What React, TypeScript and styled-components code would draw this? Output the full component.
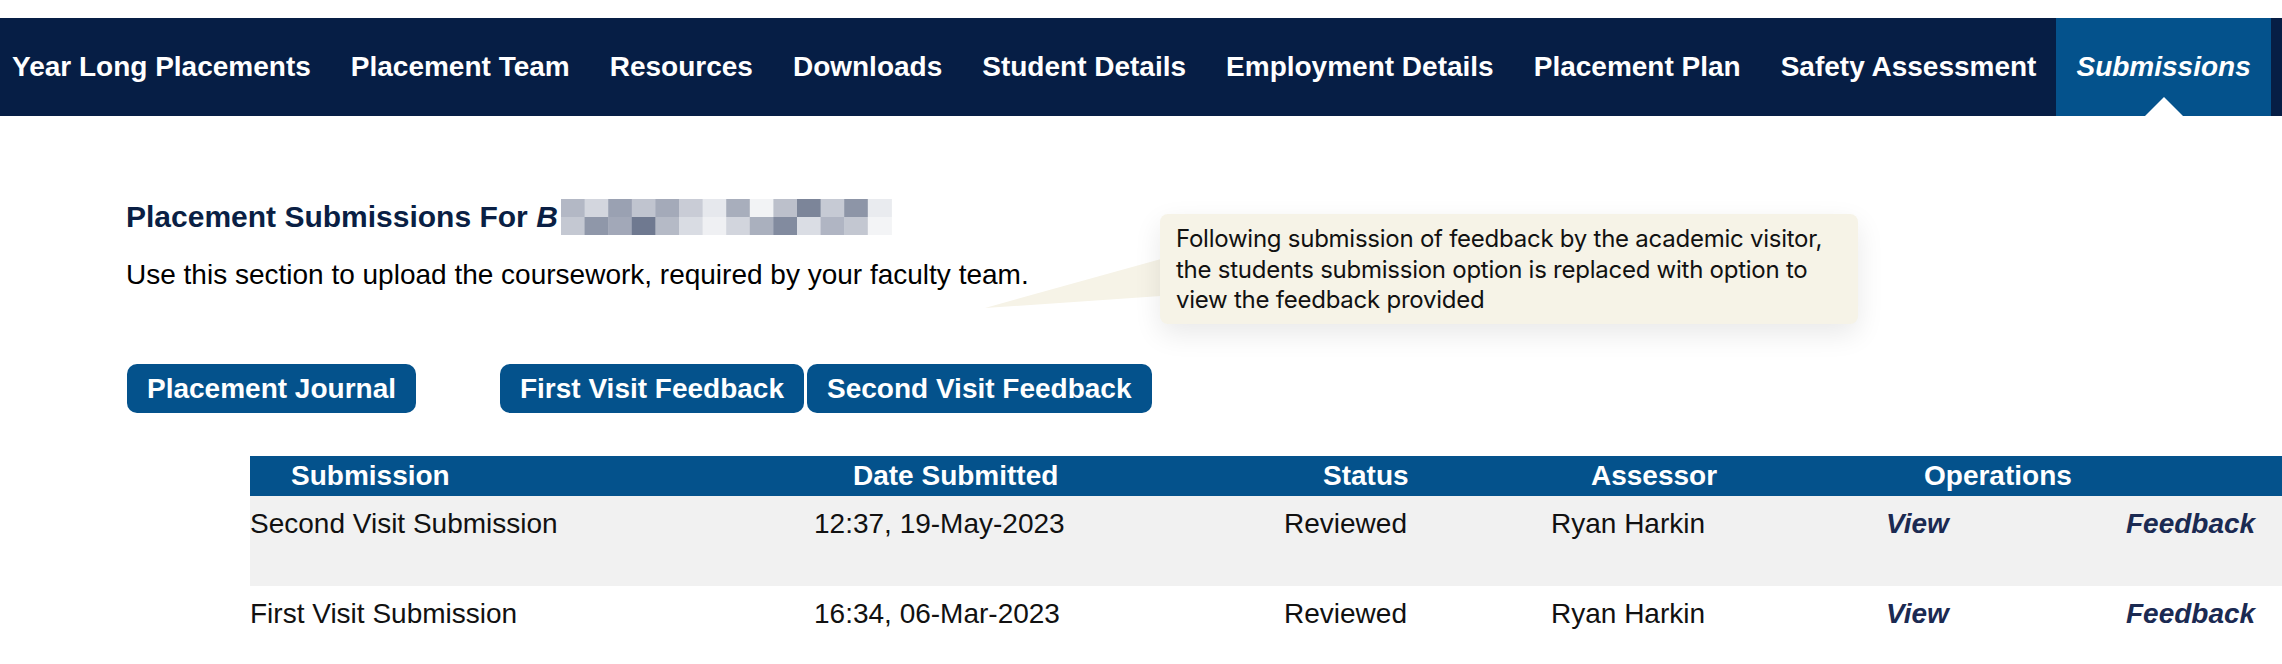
import React from "react";
import styled, { createGlobalStyle, css } from "styled-components";

const GlobalStyle = createGlobalStyle`
  html, body {
    margin: 0;
    padding: 0;
    overflow: hidden;
    background: #ffffff;
  }
  body {
    font-family: "Liberation Sans", Arial, Helvetica, sans-serif;
    color: #000;
  }
`;

const Page = styled.div`
  position: relative;
  width: 2282px;
  height: 664px;
  padding-top: 18px;
  box-sizing: border-box;
  overflow: hidden;
`;

const NavBar = styled.nav`
  display: flex;
  height: 98px;
  background: #061e45;
  overflow: hidden;
`;

const NavList = styled.ul`
  display: flex;
  height: 100%;
  margin: 0 0 0 -8px;
  padding: 0;
  list-style: none;
`;

const NavItem = styled.li<{ $active?: boolean }>`
  position: relative;
  display: flex;
  align-items: center;
  padding: 0 20px;
  font-size: 28px;
  font-weight: 700;
  color: #ffffff;
  white-space: nowrap;
  font-style: ${(p) => (p.$active ? "italic" : "normal")};
  background: ${(p) => (p.$active ? "#04528c" : "transparent")};
  ${(p) =>
    p.$active &&
    css`
      &::after {
        content: "";
        position: absolute;
        left: 50%;
        bottom: 0;
        transform: translateX(-50%);
        border-left: 19.5px solid transparent;
        border-right: 19.5px solid transparent;
        border-bottom: 19px solid #ffffff;
      }
    `}
`;

const Content = styled.main`
  display: flex;
  flex-direction: column;
  padding-left: 126px;
`;

const Heading = styled.h1`
  display: flex;
  align-items: flex-start;
  margin: 83px 0 0;
  font-size: 30px;
  line-height: 36px;
  font-weight: 700;
  color: #0a1f44;
  white-space: pre;
`;

const Name = styled.em`
  font-style: italic;
`;

const Intro = styled.p`
  margin: 24px 0 0;
  font-size: 28px;
  line-height: 32px;
  color: #000;
`;

const ButtonRow = styled.div`
  display: flex;
  align-items: center;
  margin-top: 73px;
  padding-left: 1px;
`;

const TabButton = styled.button<{ $gap?: number }>`
  height: 49px;
  margin: 0 ${(p) => p.$gap ?? 0}px 0 0;
  padding: 0 20px;
  border: none;
  border-radius: 10px;
  background: #04528c;
  color: #ffffff;
  font-family: "Liberation Sans", Arial, sans-serif;
  font-size: 28px;
  font-weight: 700;
  white-space: nowrap;
  cursor: pointer;
`;

const Table = styled.table`
  margin: 43px 0 0 124px;
  width: 2032px;
  table-layout: fixed;
  border-collapse: collapse;
  border-spacing: 0;
`;

const HeadCell = styled.th<{ $pad: number }>`
  height: 40px;
  padding: 0 0 0 ${(p) => p.$pad}px;
  background: #04528c;
  color: #ffffff;
  font-size: 28px;
  line-height: 40px;
  font-weight: 700;
  text-align: left;
  white-space: nowrap;
`;

const Row = styled.tr<{ $shade?: boolean }>`
  background: ${(p) => (p.$shade ? "#f1f1f1" : "#ffffff")};
`;

const Cell = styled.td`
  height: 90px;
  box-sizing: border-box;
  padding: 12px 0 0 0;
  vertical-align: top;
  font-size: 28px;
  line-height: 32px;
  color: #111111;
  white-space: nowrap;
`;

const Action = styled.a`
  font-weight: 700;
  font-style: italic;
  color: #1b2a52;
  text-decoration: none;
  cursor: pointer;
`;

const Tooltip = styled.div`
  position: absolute;
  left: 1160px;
  top: 214px;
  width: 698px;
  height: 110px;
  box-sizing: border-box;
  padding: 10px 16px;
  background: #f6f3e7;
  border-radius: 8px;
  box-shadow: 0 10px 28px rgba(0, 0, 0, 0.09);
  font-family: Inter, "Noto Sans", sans-serif;
  font-size: 24px;
  letter-spacing: -0.25px;
  line-height: 30.5px;
  color: #111111;
  white-space: nowrap;
`;

const TooltipArrow = styled.svg`
  position: absolute;
  left: 985px;
  top: 259px;
  overflow: visible;
`;

const mosaicTop = [
  "#b3b8c5", "#d3d6de", "#9aa1b2", "#c0c4cf", "#a4aab9", "#c9ccd6", "#e6e8ed",
  "#a8aebc", "#f2f3f5", "#bcc0cb", "#7c8599", "#c6cad4", "#8d95a7", "#e9ebef",
];
const mosaicBottom = [
  "#c4c8d2", "#8f97a9", "#a2a8b8", "#6f7990", "#b5bac6", "#d9dce3", "#eff0f3",
  "#d2d5dd", "#aab0be", "#828b9f", "#dadde4", "#b0b5c3", "#c3c7d1", "#f3f4f6",
];

function Mosaic() {
  const w = 23.6;
  const h = 18;
  return (
    <svg width="331" height="36" viewBox="0 0 331 36" style={{ marginLeft: 3 }}>
      {mosaicTop.map((c, i) => (
        <rect key={"t" + i} x={i * w} y={0} width={w + 0.5} height={h} fill={c} />
      ))}
      {mosaicBottom.map((c, i) => (
        <rect key={"b" + i} x={i * w} y={h} width={w + 0.5} height={h} fill={c} />
      ))}
    </svg>
  );
}

const navItems = [
  "Year Long Placements",
  "Placement Team",
  "Resources",
  "Downloads",
  "Student Details",
  "Employment Details",
  "Placement Plan",
  "Safety Assessment",
  "Submissions",
];

const rows = [
  { name: "Second Visit Submission", date: "12:37, 19-May-2023", shade: true },
  { name: "First Visit Submission", date: "16:34, 06-Mar-2023", shade: false },
];

export default function App() {
  return (
    <>
      <GlobalStyle />
      <Page>
        <NavBar>
          <NavList>
            {navItems.map((n) => (
              <NavItem key={n} $active={n === "Submissions"}>
                {n}
              </NavItem>
            ))}
          </NavList>
        </NavBar>
        <Content>
          <Heading>
            {"Placement Submissions For "}
            <Name>B</Name>
            <Mosaic />
          </Heading>
          <Intro>Use this section to upload the coursework, required by your faculty team.</Intro>
          <ButtonRow>
            <TabButton $gap={84}>Placement Journal</TabButton>
            <TabButton $gap={3}>First Visit Feedback</TabButton>
            <TabButton>Second Visit Feedback</TabButton>
          </ButtonRow>
          <Table>
            <colgroup>
              <col style={{ width: 564 }} />
              <col style={{ width: 470 }} />
              <col style={{ width: 267 }} />
              <col style={{ width: 335 }} />
              <col style={{ width: 240 }} />
              <col />
            </colgroup>
            <thead>
              <tr>
                <HeadCell $pad={41}>Submission</HeadCell>
                <HeadCell $pad={39}>Date Submitted</HeadCell>
                <HeadCell $pad={39}>Status</HeadCell>
                <HeadCell $pad={40}>Assessor</HeadCell>
                <HeadCell $pad={38} colSpan={2}>
                  Operations
                </HeadCell>
              </tr>
            </thead>
            <tbody>
              {rows.map((r) => (
                <Row key={r.name} $shade={r.shade}>
                  <Cell>{r.name}</Cell>
                  <Cell>{r.date}</Cell>
                  <Cell>Reviewed</Cell>
                  <Cell>Ryan Harkin</Cell>
                  <Cell>
                    <Action>View</Action>
                  </Cell>
                  <Cell>
                    <Action>Feedback</Action>
                  </Cell>
                </Row>
              ))}
            </tbody>
          </Table>
        </Content>
        <TooltipArrow width="176" height="50" viewBox="0 0 176 50">
          <polygon points="0,49 176,0 176,37" fill="#f6f3e7" />
        </TooltipArrow>
        <Tooltip>
          Following submission of feedback by the academic visitor,
          <br />
          the students submission option is replaced with option to
          <br />
          view the feedback provided
        </Tooltip>
      </Page>
    </>
  );
}
